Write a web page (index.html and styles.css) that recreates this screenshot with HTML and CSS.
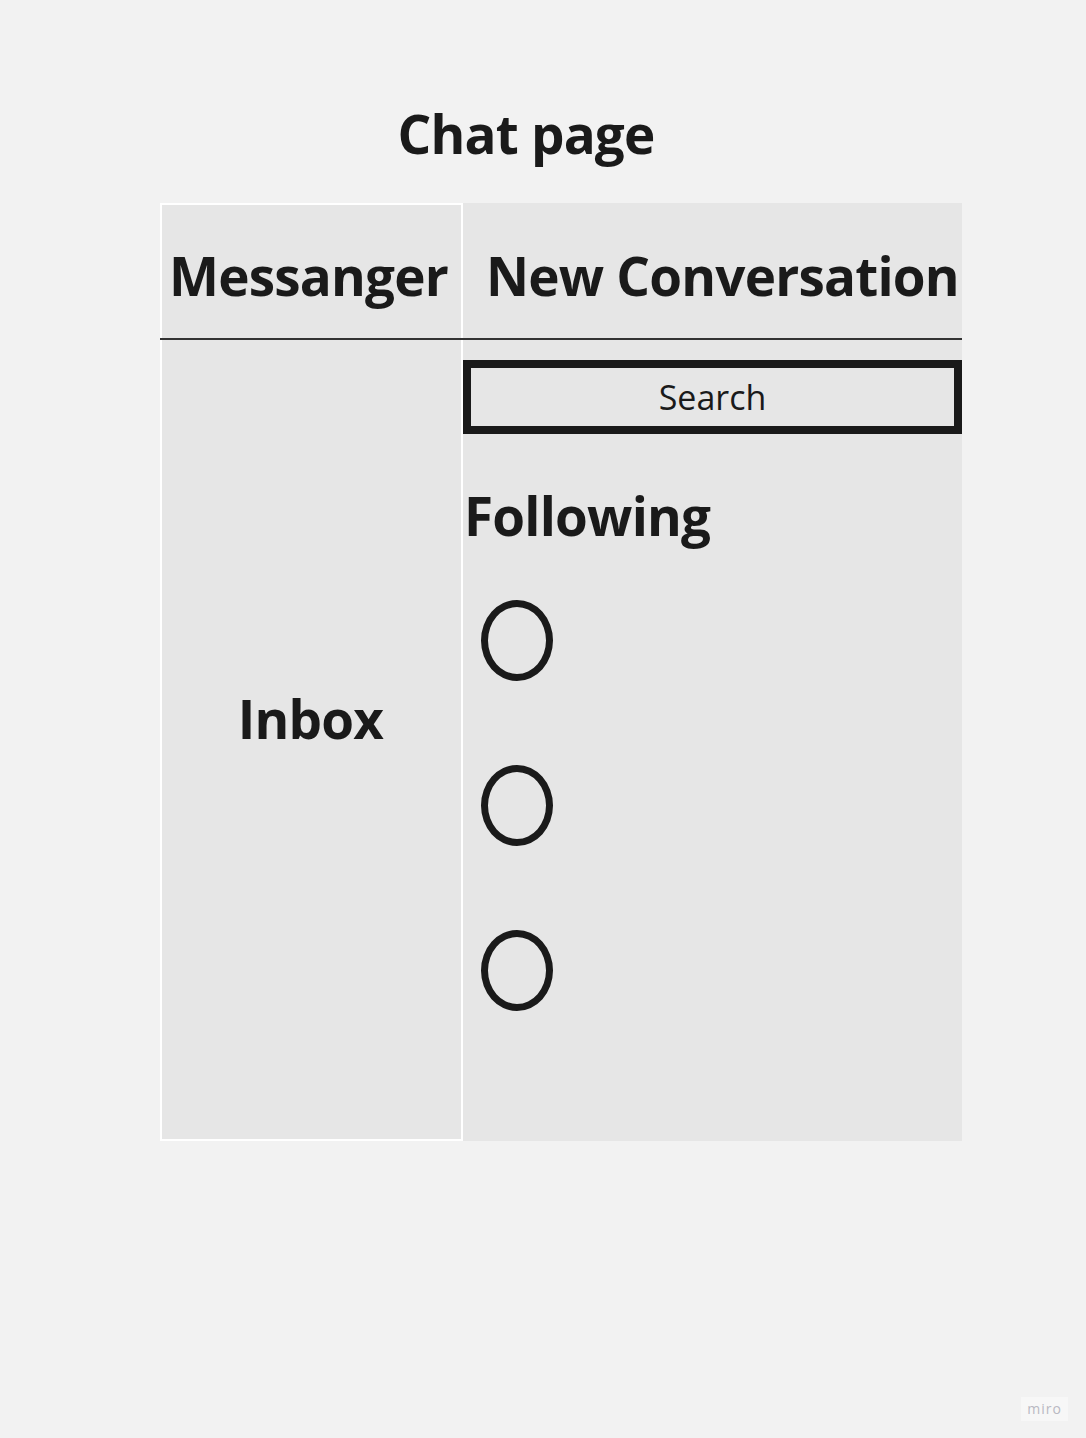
FILE: index.html
```html
<!DOCTYPE html>
<html lang="en">
<head>
<meta charset="utf-8">
<title>Chat page</title>
<link rel="stylesheet" href="styles.css">
</head>
<body>
<main class="page">
  <h1 class="title">Chat page</h1>
  <section class="board">
    <div class="board-head">
      <div class="cell-left head-left"><h2 class="heading">Messanger</h2></div>
      <div class="cell-right head-right"><h2 class="heading">New Conversation</h2></div>
    </div>
    <div class="divider"></div>
    <div class="board-body">
      <div class="cell-left body-left"><h2 class="heading">Inbox</h2></div>
      <div class="cell-right body-right">
        <div class="search">Search</div>
        <h2 class="heading following">Following</h2>
        <ul class="avatars">
          <li class="avatar"></li>
          <li class="avatar"></li>
          <li class="avatar"></li>
        </ul>
      </div>
    </div>
  </section>
</main>
<div class="miro">miro</div>
</body>
</html>
```
FILE: styles.css
```css
* { box-sizing: border-box; }
html, body { margin: 0; padding: 0; }
body {
  background: #f2f2f2;
  font-family: "Open Sans", "Liberation Sans", sans-serif;
  color: #1a1a1a;
  width: 1086px;
  height: 1438px;
  position: relative;
  overflow: hidden;
}
.page { padding-top: 107px; }
.title {
  margin: 0;
  font-size: 53px;
  line-height: 54px;
  font-weight: 700;
  letter-spacing: -0.8px;
  text-align: center;
  padding-right: 34px;
}
.heading {
  margin: 0;
  font-size: 53px;
  line-height: 54px;
  font-weight: 700;
  letter-spacing: -0.8px;
}
.board {
  margin-left: 160px;
  margin-top: 42px;
  width: 802px;
}
.board-head, .board-body { display: flex; }
.board-head { height: 135px; }
.board-body { height: 801px; }
.cell-left { width: 303px; background: #e6e6e6; border: 2px solid #ffffff; text-align: center; }
.cell-right { width: 499px; background: #e6e6e6; }
.head-left { border-bottom: 0; padding-top: 44px; padding-right: 6px; }
.head-right { padding-top: 46px; padding-left: 23px; white-space: nowrap; }
.divider { height: 2px; background: #333333; }
.body-left { border-top: 0; padding-top: 352px; padding-right: 2px; }
.search {
  margin-top: 20px;
  height: 74px;
  border: 8px solid #1a1a1a;
  font-size: 34px;
  line-height: 58px;
  text-align: center;
}
.following { margin-top: 55px; padding-left: 1px; }
.avatars {
  list-style: none;
  margin: 57px 0 0 18px;
  padding: 0;
  display: flex;
  flex-direction: column;
  gap: 84px;
}
.avatar {
  width: 72px;
  height: 81px;
  border: 7px solid #1a1a1a;
  border-radius: 50%;
}
.miro {
  position: absolute;
  right: 18px;
  bottom: 17px;
  padding: 2px 6px;
  background: #f7f7f7;
  color: #b9b9c2;
  font-size: 14px;
  line-height: 20px;
  letter-spacing: 1px;
}
```
